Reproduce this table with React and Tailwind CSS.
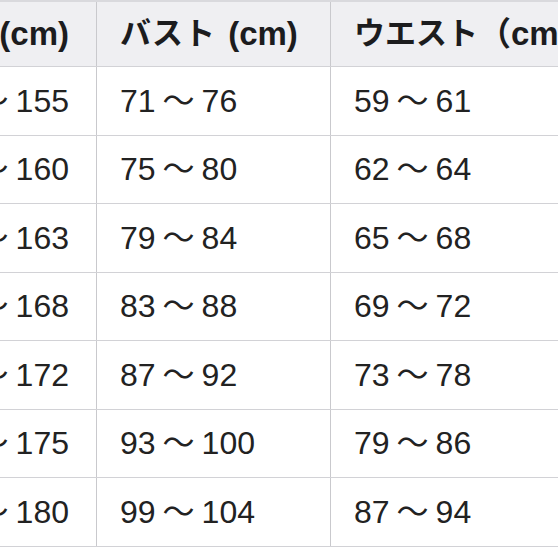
import React from 'react'

const ROWS = [
  [['150', '155'], ['71', '76'], ['59', '61']],
  [['155', '160'], ['75', '80'], ['62', '64']],
  [['158', '163'], ['79', '84'], ['65', '68']],
  [['163', '168'], ['83', '88'], ['69', '72']],
  [['167', '172'], ['87', '92'], ['73', '78']],
  [['170', '175'], ['93', '100'], ['79', '86']],
  [['175', '180'], ['99', '104'], ['87', '94']],
]

const HEAD = [
  { kana: '身長', unit: ' (cm)' },
  { kana: 'バスト', unit: ' (cm)' },
  { kana: 'ウエスト', unit: '（cm）' },
]

const font = { fontFamily: '"Liberation Sans", "Noto Sans CJK JP", sans-serif' }
const cols = 'grid grid-cols-[237px_234px_290px]'

// first column is clipped by the left edge, so its text is aligned to the right
const cellPad = (i) => (i === 0 ? 'justify-end pr-[27px]' : 'pl-[23px]')

export default function App() {
  return (
    <div className="w-[558px] h-[558px] overflow-hidden bg-white" style={font}>
      <div className="ml-[-140px] w-[761px]">
        {/* header */}
        <div className={`${cols} h-[67px] bg-[#efeff2] border-t-2 border-[#d9d9dd] border-b-[1.5px] border-b-[#d2d2d6]`}>
          {HEAD.map((h, i) => (
            <div
              key={h.kana}
              className={`flex items-center ${cellPad(i)} font-bold text-[#1c1c1e] whitespace-nowrap ${i < 2 ? 'border-r-[1.5px] border-[#c9c9cd]' : ''}`}
            >
              <span className={`text-[31px] ${i < 2 ? 'tracking-[1px] mr-[3px]' : ''}`}>{h.kana}</span>
              <span className="text-[33px] whitespace-pre">{h.unit}</span>
            </div>
          ))}
        </div>

        {/* body */}
        {ROWS.map((row, r) => (
          <div key={r} className={`${cols} h-[68.5px] border-b-[1.5px] border-[#d2d2d6]`}>
            {row.map(([a, b], i) => (
              <div
                key={i}
                className={`flex items-center ${cellPad(i)} text-[32px] text-[#222] whitespace-nowrap ${i < 2 ? 'border-r-[1.5px] border-[#c9c9cd]' : ''}`}
              >
                {a}
                <span className="mx-[7px]">～</span>
                {b}
              </div>
            ))}
          </div>
        ))}
      </div>
    </div>
  )
}
